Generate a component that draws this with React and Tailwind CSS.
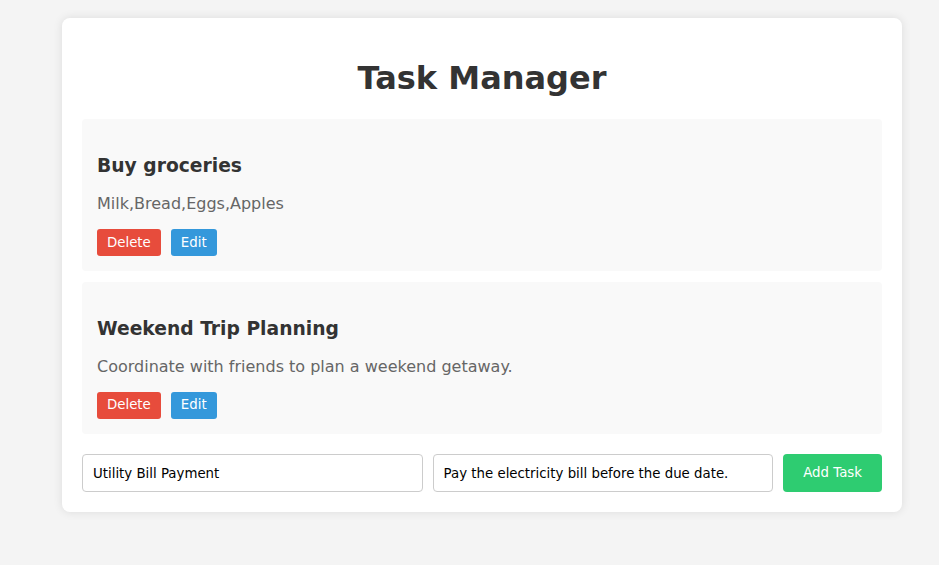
import React from "react";

const tasks = [
  { title: "Buy groceries", desc: "Milk,Bread,Eggs,Apples" },
  { title: "Weekend Trip Planning", desc: "Coordinate with friends to plan a weekend getaway." },
];

export default function App() {
  return (
    <div
      className="min-h-screen bg-[#f4f4f4] pt-[18px] pl-[62px]"
      style={{ fontFamily: '"DejaVu Sans", sans-serif' }}
    >
      <div className="w-[840px] bg-white rounded-lg p-5 shadow-[0_0_10px_rgba(0,0,0,0.1)]">
        <h1 className="mt-[21px] mb-[22px] text-[32px] leading-[38px] font-bold text-center text-[#333]">
          Task Manager
        </h1>
        <div className="flex flex-col gap-[10.6px]">
          {tasks.map((t) => (
            <div key={t.title} className="bg-[#f9f9f9] rounded-[4px] p-[15px]">
              <h3 className="mt-[21px] text-[18.72px] leading-[22px] font-bold text-[#333]">{t.title}</h3>
              <p className="mt-[17px] text-base leading-[19px] text-[#666]">{t.desc}</p>
              <div className="mt-[16px] flex gap-[10px]">
                <button className="h-[27px] px-[10px] text-[13.333px] rounded-[3px] bg-[#e74c3c] text-white">
                  Delete
                </button>
                <button className="h-[27px] px-[10px] text-[13.333px] rounded-[3px] bg-[#3498db] text-white">
                  Edit
                </button>
              </div>
            </div>
          ))}
        </div>
        <div className="mt-[20.4px] flex gap-[10px]">
          <input
            className="flex-1 min-w-0 h-[38.5px] px-[10px] text-[13.333px] text-black border border-[#ccc] rounded-[4px] outline-none"
            defaultValue="Utility Bill Payment"
          />
          <input
            className="flex-1 min-w-0 h-[38.5px] px-[10px] text-[13.333px] text-black border border-[#ccc] rounded-[4px] outline-none"
            defaultValue="Pay the electricity bill before the due date."
          />
          <button className="h-[38.5px] px-5 text-[13.333px] rounded-[4px] bg-[#2ecc71] text-white">
            Add Task
          </button>
        </div>
      </div>
    </div>
  );
}
